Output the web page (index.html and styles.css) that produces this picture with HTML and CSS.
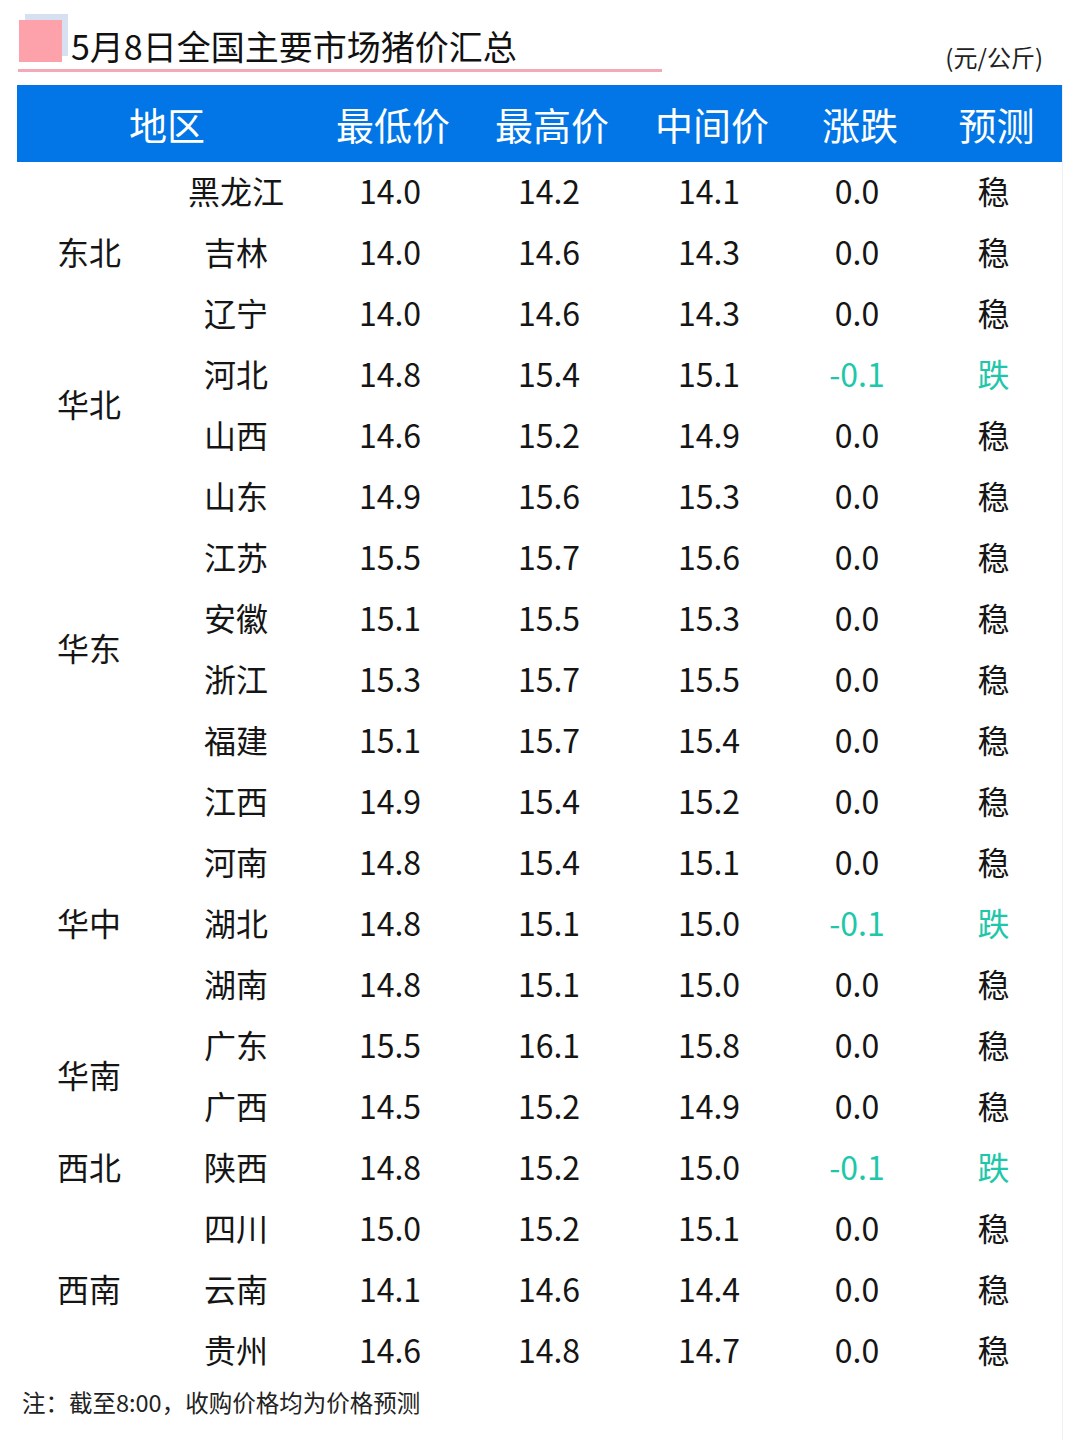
FILE: index.html
```html
<!DOCTYPE html>
<html lang="zh-CN">
<head>
<meta charset="utf-8">
<title>5月8日全国主要市场猪价汇总</title>
<link rel="stylesheet" href="styles.css">
</head>
<body>
<div class="page">
  <div class="title-row">
    <div class="title-block">
      <span class="mark"></span>
      <h1 class="title">5月8日全国主要市场猪价汇总</h1>
    </div>
    <span class="unit">(元/公斤)</span>
  </div>
  <div class="sheet">
    <table class="prices">
      <colgroup>
        <col class="c-region"><col class="c-prov"><col class="c-low"><col class="c-high"><col class="c-mid"><col class="c-chg"><col class="c-fc">
      </colgroup>
      <thead>
        <tr><th colspan="2">地区</th><th>最低价</th><th>最高价</th><th>中间价</th><th>涨跌</th><th>预测</th></tr>
      </thead>
      <tbody>
        <tr><td rowspan="3">东北</td><td>黑龙江</td><td>14.0</td><td>14.2</td><td>14.1</td><td>0.0</td><td>稳</td></tr>
        <tr><td>吉林</td><td>14.0</td><td>14.6</td><td>14.3</td><td>0.0</td><td>稳</td></tr>
        <tr><td>辽宁</td><td>14.0</td><td>14.6</td><td>14.3</td><td>0.0</td><td>稳</td></tr>
        <tr><td rowspan="2">华北</td><td>河北</td><td>14.8</td><td>15.4</td><td>15.1</td><td class="down">-0.1</td><td class="down">跌</td></tr>
        <tr><td>山西</td><td>14.6</td><td>15.2</td><td>14.9</td><td>0.0</td><td>稳</td></tr>
        <tr><td rowspan="6">华东</td><td>山东</td><td>14.9</td><td>15.6</td><td>15.3</td><td>0.0</td><td>稳</td></tr>
        <tr><td>江苏</td><td>15.5</td><td>15.7</td><td>15.6</td><td>0.0</td><td>稳</td></tr>
        <tr><td>安徽</td><td>15.1</td><td>15.5</td><td>15.3</td><td>0.0</td><td>稳</td></tr>
        <tr><td>浙江</td><td>15.3</td><td>15.7</td><td>15.5</td><td>0.0</td><td>稳</td></tr>
        <tr><td>福建</td><td>15.1</td><td>15.7</td><td>15.4</td><td>0.0</td><td>稳</td></tr>
        <tr><td>江西</td><td>14.9</td><td>15.4</td><td>15.2</td><td>0.0</td><td>稳</td></tr>
        <tr><td rowspan="3">华中</td><td>河南</td><td>14.8</td><td>15.4</td><td>15.1</td><td>0.0</td><td>稳</td></tr>
        <tr><td>湖北</td><td>14.8</td><td>15.1</td><td>15.0</td><td class="down">-0.1</td><td class="down">跌</td></tr>
        <tr><td>湖南</td><td>14.8</td><td>15.1</td><td>15.0</td><td>0.0</td><td>稳</td></tr>
        <tr><td rowspan="2">华南</td><td>广东</td><td>15.5</td><td>16.1</td><td>15.8</td><td>0.0</td><td>稳</td></tr>
        <tr><td>广西</td><td>14.5</td><td>15.2</td><td>14.9</td><td>0.0</td><td>稳</td></tr>
        <tr><td>西北</td><td>陕西</td><td>14.8</td><td>15.2</td><td>15.0</td><td class="down">-0.1</td><td class="down">跌</td></tr>
        <tr><td rowspan="3">西南</td><td>四川</td><td>15.0</td><td>15.2</td><td>15.1</td><td>0.0</td><td>稳</td></tr>
        <tr><td>云南</td><td>14.1</td><td>14.6</td><td>14.4</td><td>0.0</td><td>稳</td></tr>
        <tr><td>贵州</td><td>14.6</td><td>14.8</td><td>14.7</td><td>0.0</td><td>稳</td></tr>
      </tbody>
    </table>
    <p class="note">注：截至8:00，收购价格均为价格预测</p>
  </div>
</div>
</body>
</html>
```

FILE: styles.css
```css
html, body {
  margin: 0;
  padding: 0;
  background: #ffffff;
}

body {
  font-family: "Noto Sans CJK SC", "Noto Sans", sans-serif;
  color: #151515;
}

.page {
  width: 1080px;
  height: 1440px;
  display: flex;
  flex-direction: column;
  overflow: hidden;
}

.title-row {
  display: flex;
  justify-content: space-between;
  align-items: flex-end;
  padding-right: 37px;
}

.title-block {
  margin-left: 18px;
  width: 644px;
  padding-top: 20px;
  display: flex;
  align-items: flex-end;
  border-bottom: 3px solid #f3a9b7;
}

.mark {
  flex: none;
  width: 43px;
  height: 42px;
  margin-left: 1px;
  margin-bottom: 7px;
  background: #fda1aa;
  box-shadow: 6px -6px 0 #d7e0f0;
}

.title {
  margin: 0 0 0 9px;
  padding-bottom: 3px;
  font-size: 34px;
  line-height: 40px;
  font-weight: 400;
  color: #111111;
}

.unit {
  font-size: 24px;
  line-height: 28px;
  margin-bottom: 1px;
  color: #222222;
}

.sheet {
  flex: 1;
  margin-top: 13px;
  margin-left: 17px;
  width: 1045px;
  border-right: 1px solid #eef0f2;
}

.prices {
  width: 1045px;
  border-collapse: collapse;
  table-layout: fixed;
}

.c-region { width: 144px; }
.c-prov { width: 150px; }
.c-low { width: 158px; }
.c-high { width: 160px; }
.c-mid { width: 160px; }
.c-chg { width: 136px; }
.c-fc { width: 137px; }

.prices th {
  height: 77px;
  padding: 0 0 0 6px;
  background: #0276e6;
  color: #ffffff;
  font-size: 38px;
  font-weight: 400;
  text-align: center;
  vertical-align: middle;
}

.prices td {
  height: 55px;
  padding: 0 0 6px 0;
  font-size: 32px;
  line-height: 40px;
  text-align: center;
  vertical-align: middle;
  color: #151515;
}

.prices td.down {
  color: #1ec7a9;
}

.note {
  margin: 5px 0 0 0;
  padding-left: 5px;
  font-size: 23.5px;
  line-height: 30px;
  color: #222222;
}
```
